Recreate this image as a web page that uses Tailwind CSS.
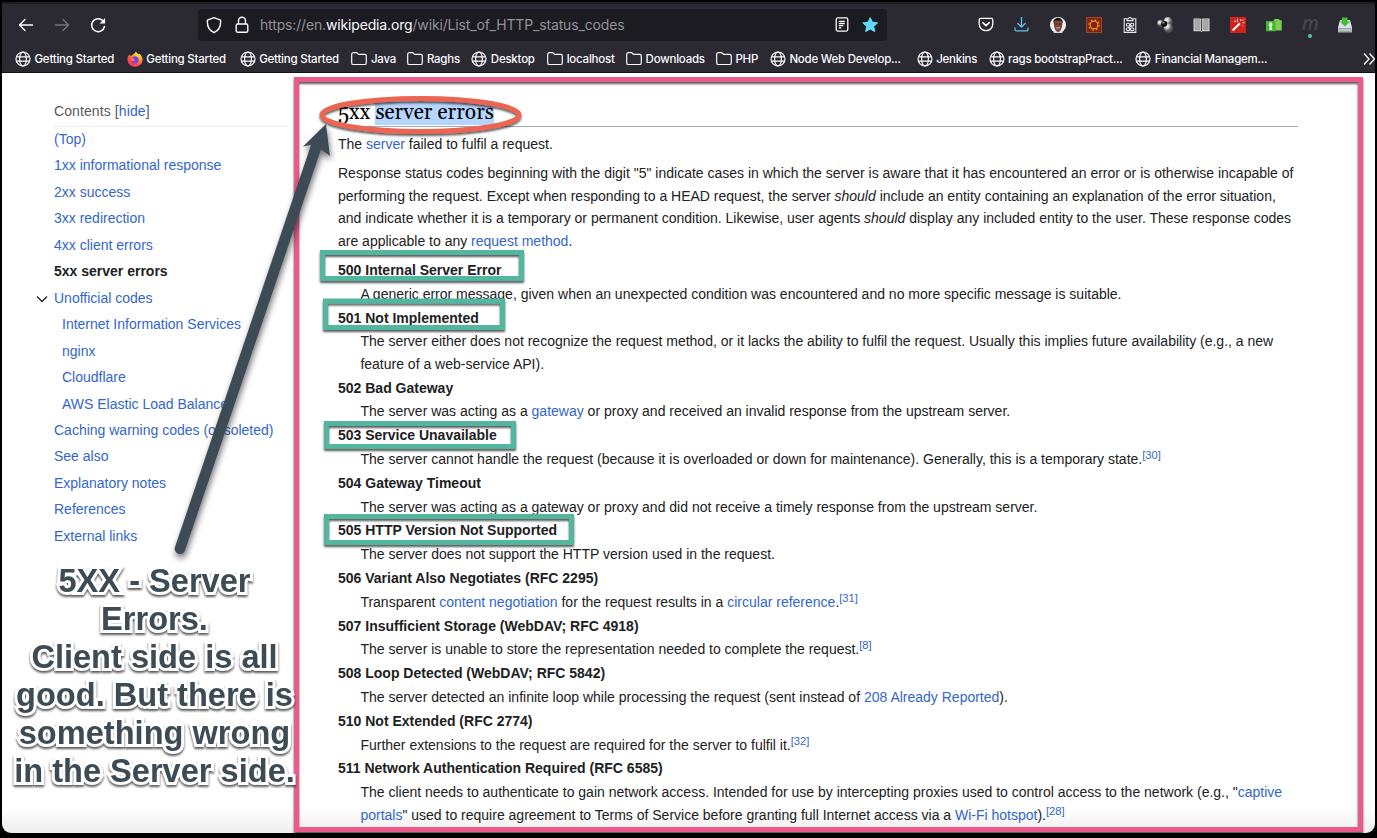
<!DOCTYPE html>
<html lang="en">
<head>
<meta charset="utf-8">
<title>List of HTTP status codes</title>
<script src="https://cdn.jsdelivr.net/npm/@tailwindcss/browser@4"></script>
</head>
<body class="w-[1377px] h-[838px] overflow-hidden bg-black relative font-['Liberation_Sans',Arial,sans-serif]">
<svg width="0" height="0" class="absolute">
  <defs>
    <symbol id="globe" viewBox="0 0 16 16"><g fill="none" stroke="#fbfbfe" stroke-width="1.2"><circle cx="8" cy="8" r="7"/><ellipse cx="8" cy="8" rx="3.4" ry="7"/><path d="M1.5 5.8h13M1.5 10.2h13"/></g></symbol>
    <symbol id="folder" viewBox="0 0 16 16"><path d="M2.3 1.600h3.400l1.800 1.800h6.200a1.600 1.600 0 0 1 1.600 1.600v6.900a1.600 1.600 0 0 1-1.600 1.600H2.300a1.600 1.600 0 0 1-1.600-1.600V3.200a1.600 1.600 0 0 1 1.600-1.600z" fill="none" stroke="#fbfbfe" stroke-width="1.2"/></symbol>
    <radialGradient id="fx" cx=".75" cy=".15" r="1"><stop offset="0" stop-color="#fff04d"/><stop offset=".4" stop-color="#ff9a2a"/><stop offset=".75" stop-color="#ff4547"/><stop offset="1" stop-color="#e8267a"/></radialGradient>
    <symbol id="fox" viewBox="0 0 16 16"><path d="M8.5.4c1.500.9 2.300 2 2.700 3.200l1.200-.900c2 1.600 3.200 3.600 3.200 6A7.600 7.300 0 0 1 .4 8.700c0-2.200.7-4 2-5.500l.600 1.600 2-.300C6 2.700 8.400 2.300 8.500.4z" fill="url(#fx)"/><path d="M4.700 6.600 7 5.500c2.500-.6 4.700.8 4.700 3.200a3.700 3.700 0 0 1-7.300 1c1.300.9 3 .5 3.700-.5-1.300 0-1.500-.8-.8-1.400-1 0-2-.4-2.600-1.200z" fill="#7542e5"/></symbol>
  </defs>
</svg>

<div class="ml-[2px] mt-[2px] w-[1373px] h-[831px] bg-white rounded-b-[9px] overflow-hidden flex flex-col bg-linear-to-b from-white from-97% to-[#eeeeee]">
  <header class="h-[71px] shrink-0 bg-[#2b2a33] border-t-2 border-[#1c1b22] border-b-[#111116] border-b-1 text-[#fbfbfe] font-[Inter,sans-serif]">
    <div class="h-[41px] flex items-center pl-[15px]">
      <svg class="w-[18px] h-4" viewBox="0 0 18 16" fill="none" stroke="#fbfbfe" stroke-width="1.4" stroke-linecap="round" stroke-linejoin="round"><path d="M15.500 8H2.500M8 2.500 2.500 8 8 13.500"/></svg>
      <svg class="w-[18px] h-4 ml-[18px]" viewBox="0 0 18 16" fill="none" stroke="#74737b" stroke-width="1.4" stroke-linecap="round" stroke-linejoin="round"><path d="M2.500 8h13M10 2.500l5.500 5.500-5.500 5.500"/></svg>
      <svg class="w-[18px] h-[18px] ml-[18px]" viewBox="0 0 18 18"><path d="M15.500 10.500a6.500 6.500 0 1 1-1.800-6" fill="none" stroke="#fbfbfe" stroke-width="1.500" stroke-linecap="round"/><path d="M16.100 2v5.500h-5.500z" fill="#fbfbfe"/></svg>
      <div class="ml-[91px] w-[689px] h-8 rounded-[4px] bg-[#1c1b22] flex items-center pl-2">
        <svg class="w-4 h-[18px]" viewBox="0 0 16 18" fill="none" stroke="#fbfbfe" stroke-width="1.400" stroke-linejoin="round"><path d="M8 1.600l6.600 2.500c.4 5.500-1.600 10.300-6.600 12.600C3 14.400 1 9.600 1.400 4.100z"/></svg>
        <svg class="w-[14px] h-[18px] ml-[13px]" viewBox="0 0 14 18" fill="none" stroke="#fbfbfe" stroke-width="1.400"><rect x="1.200" y="8" width="11.600" height="8.300" rx="1.600"/><path d="M3.500 8V4.700a3.500 3.500 0 0 1 7 0V8"/></svg>
        <span class="ml-[11px] w-[570px] text-[14px] tracking-[-0.155px] leading-5 text-[#93929a] whitespace-nowrap">https://en.<span class="text-[#fbfbfe]">wikipedia.org</span>/wiki/List_of_HTTP_status_codes</span>
        <svg class="w-[14px] h-4 ml-[5px]" viewBox="0 0 14 16" fill="none" stroke="#fbfbfe" stroke-width="1.300"><rect x="1.200" y=".9" width="11.600" height="13.200" rx="1.500"/><path d="M3.800 4.300h6M3.800 6.500h6M3.800 8.700h4.500M3.800 10.800h2.500"/></svg>
        <svg class="w-4 h-4 ml-[13px]" viewBox="0 0 16 16"><path d="M8.200 .6l2.200 4.700 5.200.6-3.900 3.500 1.100 5.200-4.600-2.500-4.600 2.500 1.100-5.200L.8 5.900l5.200-.6z" fill="#5ddcff" stroke="#5ddcff" stroke-linejoin="round"/></svg>
      </div>
      <div class="ml-[91px] flex items-center gap-[19.9px]">
        <svg class="w-4 h-4" viewBox="0 0 16 16" fill="none" stroke="#fbfbfe" stroke-width="1.300" stroke-linecap="round" stroke-linejoin="round"><path d="M2.800 1.300h10.400a1.600 1.600 0 0 1 1.600 1.600v4A6.800 6.800 0 0 1 1.200 6.900v-4a1.600 1.600 0 0 1 1.600-1.600z"/><path d="M4.800 5.700 8 8.700l3.200-3" stroke-width="1.600"/></svg>
        <svg class="w-4 h-4" viewBox="0 0 16 16" fill="none" stroke="#5ac8ea" stroke-width="1.300" stroke-linecap="round" stroke-linejoin="round"><path d="M7.500 .5v9.500M3.800 6.500 7.500 10.100 11.200 6.500M1 11v1.400a1.500 1.500 0 0 0 1.500 1.500h10a1.500 1.500 0 0 0 1.500-1.500V11"/></svg>
        <svg class="w-4 h-4" viewBox="0 0 16 16"><circle cx="8" cy="8" r="8" fill="#f1f0f0"/><path d="M3 15c1-2 9-2 10 0a8 8 0 0 1-10 0z" fill="#d9d9e2"/><path d="M3.800 6c0-7 8.800-7 8.600 0 0 5-2 9-4.300 9S3.800 11 3.800 6z" fill="#7d4a3b"/><path d="M3.300 6.500C2.300-1 13.700-1 12.700 6.500 12 3.800 10.500 3.600 8 3.700 5.500 3.600 4 3.800 3.300 6.500z" fill="#211815"/><path d="M4.500 7h3M8.500 7h3" stroke="#3a211a" stroke-width="1.200"/><path d="M6.200 10.900h3.600" stroke="#ddd" stroke-width=".8"/></svg>
        <svg class="w-4 h-4" viewBox="0 0 16 16"><path d="M0 0h16v16H0z" fill="#a0452a"/><path d="M1 1h14v14H1z" fill="#7e2410"/><g fill="none" stroke="#ee951f"><circle cx="8" cy="8" r="3.900" stroke-width="1.200"/><circle cx="8" cy="8" r="5.100" stroke-width="1.300" stroke-dasharray="1.600 2.405"/></g></svg>
        <svg class="w-4 h-4" viewBox="0 0 16 16" fill="none" stroke="#e8e8ec" stroke-width="1.100"><path d="M4.800 1.800H2.200v13.600h11.600V1.800h-2.600"/><path d="M5 3.600V1.800h1.600a1.400 1.400 0 0 1 2.800 0H11v1.800z"/><rect x="4.400" y="6.200" width="3.300" height="2.800" rx="1.300"/><rect x="8.500" y="6.200" width="3.300" height="2.800" rx="1.300"/><rect x="4.400" y="10.800" width="3.300" height="2.800" rx="1.300"/><rect x="8.500" y="10.800" width="3.300" height="2.800" rx="1.300"/><path d="M6 11l4-2.300"/></svg>
        <svg class="w-4 h-4" viewBox="0 0 16 16"><defs><radialGradient id="ball" cx=".35" cy=".3"><stop stop-color="#fff"/><stop offset=".5" stop-color="#c1c1c1"/><stop offset="1" stop-color="#555"/></radialGradient><radialGradient id="dark" cx=".35" cy=".3"><stop stop-color="#aaa"/><stop offset=".5" stop-color="#222"/><stop offset="1" stop-color="#050505"/></radialGradient></defs><circle cx="11" cy="4.700" r="4.600" fill="url(#ball)"/><circle cx="11.300" cy="11" r="4.700" fill="url(#ball)"/><circle cx="3.600" cy="6.500" r="3.400" fill="url(#ball)"/><circle cx="7.200" cy="6.800" r="3" fill="url(#dark)"/></svg>
        <svg class="w-[17px] h-4" viewBox="0 0 17 16"><path d="M.5 1.500h7l1 .8 1-.8h7v12.800h-7l-1 1-1-1h-7z" fill="#d5d5d5"/><path d="M1.500 2h6v11.300h-6zM9.500 2h6v11.300h-6z" fill="#a6a6a6"/><path d="M8.500 2.500v12" stroke="#4a4a4a"/></svg>
        <svg class="w-4 h-4" viewBox="0 0 16 16"><path d="M0 0h16v16H0z" fill="#d2201d"/><path d="M2.700 13.500 10 6.200" stroke="#fff" stroke-width="2"/><path d="M4 4.300h2M7.500 3.300v2M10.500 2l.2 2M13.800 2.300l-1.500 1.500M12.500 5.500l2 .3M12 8l1.200 1.200M7 2l1 .6" stroke="#fff" stroke-width=".9"/></svg>
        <svg class="w-4 h-4" viewBox="0 0 16 16"><path d="M7.500 3.200l1.300-1.300h4l1.200 1.300h1.700V13.500h-8z" fill="#7bcf4d"/><path d="M0 4h9.500v10.200H0z" fill="#43b733"/><path d="M4.700 4.800 7 7.400H2.400z" fill="#e1f5db"/><circle cx="4.700" cy="8.400" r="1.600" fill="#e1f5db"/><circle cx="4.700" cy="11.500" r="1.600" fill="#e1f5db"/></svg>
        <div class="w-4 h-4 relative"><i class="absolute left-0 -top-[6px] text-[19px] leading-6 text-[#46464b] font-['Open_Sans',sans-serif] font-semibold">m</i><b class="absolute left-[6px] top-[17px] w-1 h-1 rounded-full bg-[#5bc4a0]"></b></div>
        <svg class="w-4 h-4 ml-[-1px]" viewBox="0 0 16 16"><path d="M3 3h10l2 7.500v4.800H1v-4.800z" fill="#dde1e6"/><path d="M1.500 11h13v4.300h-13z" fill="#98a2a9"/><path d="M2.500 13h11" stroke="#dfe4e8"/><path d="M5 .5h5.500v4H13L8 9.500l-5-5h2z" fill="#44bb35"/></svg>
      </div>
    </div>
    <nav class="h-[27px] flex items-center pl-[13px] text-[11.5px] font-medium tracking-[-0.23px] leading-4 whitespace-nowrap">
      <div class="w-[112px] flex items-center gap-[3.5px]"><svg class="w-4 h-4"><use href="#globe"/></svg><span>Getting Started</span></div>
      <div class="w-[113px] flex items-center gap-[3.5px]"><svg class="w-4 h-4"><use href="#fox"/></svg><span>Getting Started</span></div>
      <div class="w-[112px] flex items-center gap-[3.5px]"><svg class="w-4 h-4"><use href="#globe"/></svg><span>Getting Started</span></div>
      <div class="w-[56px] flex items-center gap-[3.5px]"><svg class="w-4 h-4"><use href="#folder"/></svg><span>Java</span></div>
      <div class="w-[64px] flex items-center gap-[3.5px]"><svg class="w-4 h-4"><use href="#folder"/></svg><span>Raghs</span></div>
      <div class="w-[76px] flex items-center gap-[3.5px]"><svg class="w-4 h-4"><use href="#globe"/></svg><span>Desktop</span></div>
      <div class="w-[79px] flex items-center gap-[3.5px]"><svg class="w-4 h-4"><use href="#folder"/></svg><span>localhost</span></div>
      <div class="w-[90px] flex items-center gap-[3.5px]"><svg class="w-4 h-4"><use href="#folder"/></svg><span>Downloads</span></div>
      <div class="w-[54px] flex items-center gap-[3.5px]"><svg class="w-4 h-4"><use href="#folder"/></svg><span>PHP</span></div>
      <div class="w-[147px] flex items-center gap-[3.5px]"><svg class="w-4 h-4"><use href="#globe"/></svg><span>Node Web Develop...</span></div>
      <div class="w-[72px] flex items-center gap-[3.5px]"><svg class="w-4 h-4"><use href="#globe"/></svg><span>Jenkins</span></div>
      <div class="w-[147px] flex items-center gap-[3.5px]"><svg class="w-4 h-4"><use href="#globe"/></svg><span>rags bootstrapPract...</span></div>
      <div class="w-[228px] flex items-center gap-[3.5px]"><svg class="w-4 h-4"><use href="#globe"/></svg><span>Financial Managem...</span></div>
      <svg class="w-3 h-4 shrink-0" viewBox="0 0 12 16" fill="none" stroke="#fbfbfe" stroke-width="1.300"><path d="M1 2.500 6 8l-5 5.500M6.500 2.500l5 5.500-5 5.500"/></svg>
    </nav>
  </header>

  <div class="flex">
    <aside class="pl-[52px] pt-[25px] w-[286px] shrink-0 text-[14px] text-[#3366cc] whitespace-nowrap">
      <div class="h-[29px] pt-[3px] leading-[20px] border-b border-[#eaecf0] text-[#54595d]"><span class="tracking-[0.1px]">Contents [<span class="text-[#3366cc]">hide</span>]</span></div>
      <ul class="leading-[26.45px] -mt-px">
        <li>(Top)</li>
        <li>1xx informational response</li>
        <li>2xx success</li>
        <li>3xx redirection</li>
        <li>4xx client errors</li>
        <li class="font-bold text-[#202122]">5xx server errors</li>
        <li class="flex items-center -ml-[18px]"><svg class="w-3 h-3 mr-[6px] mt-[3px]" viewBox="0 0 12 12" fill="none" stroke="#202122" stroke-width="1.300"><path d="M1 3.500l5 5 5-5"/></svg>Unofficial codes</li>
        <li class="pl-2">Internet Information Services</li>
        <li class="pl-2">nginx</li>
        <li class="pl-2">Cloudflare</li>
        <li class="pl-2">AWS Elastic Load Balancer</li>
        <li>Caching warning codes (obsoleted)</li>
        <li>See also</li>
        <li>Explanatory notes</li>
        <li>References</li>
        <li>External links</li>
      </ul>
    </aside>
    <main class="ml-[50px] pt-[25px] w-[960px] text-[14px] leading-[22.4px] text-[#202122] whitespace-nowrap">
      <h2 class="h-[29px] border-b border-[#a2a9b1] font-[Gelasio,Georgia,'Liberation_Serif',serif] text-[21px] leading-[30px] text-black">5xx <span class="bg-[#b5d5ff] inline-block leading-[23px]">server errors</span></h2>
      <p class="mt-[6px]">The <a class="text-[#3366cc]">server</a> failed to fulfil a request.</p>
      <p class="mt-[7px]">Response status codes beginning with the digit "5" indicate cases in which the server is aware that it has encountered an error or is otherwise incapable of<br>performing the request. Except when responding to a HEAD request, the server <i>should</i> include an entity containing an explanation of the error situation,<br>and indicate whether it is a temporary or permanent condition. Likewise, user agents <i>should</i> display any included entity to the user. These response codes<br>are applicable to any <a class="text-[#3366cc]">request method</a>.</p>
      <dl class="mt-[7px] [&_dt]:font-bold [&_dt]:mb-[1.4px] [&_dd]:mb-[1.4px] [&_dd]:ml-[22.4px] [&_a]:text-[#3366cc] [&_sup]:text-[11.2px] [&_sup]:leading-none [&_sup]:text-[#3366cc] [&_sup]:top-[-5px]">
        <dt>500 Internal Server Error</dt>
        <dd>A generic error message, given when an unexpected condition was encountered and no more specific message is suitable.</dd>
        <dt>501 Not Implemented</dt>
        <dd>The server either does not recognize the request method, or it lacks the ability to fulfil the request. Usually this implies future availability (e.g., a new<br>feature of a web-service API).</dd>
        <dt>502 Bad Gateway</dt>
        <dd>The server was acting as a <a>gateway</a> or proxy and received an invalid response from the upstream server.</dd>
        <dt>503 Service Unavailable</dt>
        <dd>The server cannot handle the request (because it is overloaded or down for maintenance). Generally, this is a temporary state.<sup>[30]</sup></dd>
        <dt>504 Gateway Timeout</dt>
        <dd>The server was acting as a gateway or proxy and did not receive a timely response from the upstream server.</dd>
        <dt>505 HTTP Version Not Supported</dt>
        <dd>The server does not support the HTTP version used in the request.</dd>
        <dt>506 Variant Also Negotiates (RFC 2295)</dt>
        <dd>Transparent <a>content negotiation</a> for the request results in a <a>circular reference</a>.<sup>[31]</sup></dd>
        <dt>507 Insufficient Storage (WebDAV; RFC 4918)</dt>
        <dd>The server is unable to store the representation needed to complete the request.<sup>[8]</sup></dd>
        <dt>508 Loop Detected (WebDAV; RFC 5842)</dt>
        <dd>The server detected an infinite loop while processing the request (sent instead of <a>208 Already Reported</a>).</dd>
        <dt>510 Not Extended (RFC 2774)</dt>
        <dd>Further extensions to the request are required for the server to fulfil it.<sup>[32]</sup></dd>
        <dt>511 Network Authentication Required (RFC 6585)</dt>
        <dd>The client needs to authenticate to gain network access. Intended for use by intercepting proxies used to control access to the network (e.g., "<a>captive</a><br><a>portals</a>" used to require agreement to Terms of Service before granting full Internet access via a <a>Wi-Fi hotspot</a>).<sup>[28]</sup></dd>
      </dl>
    </main>
  </div>
</div>

<svg class="absolute left-0 top-0 w-[1377px] h-[838px] pointer-events-none" viewBox="0 0 1377 838" fill="none">
  <defs>
    <filter id="s1" x="-10%" y="-30%" width="120%" height="170%"><feDropShadow dx="0" dy="2" stdDeviation=".8" flood-color="#000" flood-opacity=".65"/></filter>
    <filter id="s2" x="-20%" y="-10%" width="140%" height="120%"><feDropShadow dx="1" dy="4" stdDeviation="3" flood-color="#000" flood-opacity=".55"/></filter>
  </defs>
  <rect x="296.500" y="79.500" width="1064" height="750" stroke="#ea5a8a" stroke-width="5" filter="url(#s1)"/>
  <g stroke="#52b69f" stroke-width="5" filter="url(#s1)">
    <rect x="322.500" y="252.500" width="199" height="26"/>
    <rect x="325.500" y="301" width="177" height="26.500"/>
    <rect x="326.500" y="423.500" width="187" height="23"/>
    <rect x="326.500" y="516.500" width="245" height="26"/>
  </g>
  <ellipse cx="420.500" cy="115" rx="98.500" ry="16.500" stroke="#ec6552" stroke-width="5" filter="url(#s1)"/>
  <g filter="url(#s2)">
    <path d="M326 124l4 32-9-6.500L185 550.500a5.200 5.200 0 0 1-10-3.500L311 145l-8 1.500z" fill="#3d4b55"/>
  </g>
</svg>
<div class="absolute left-[-5px] top-[562px] w-[319px] text-center font-bold text-[32.6px] leading-[38px] text-[#3d4b55] whitespace-nowrap [-webkit-text-stroke:6px_white] [paint-order:stroke_fill] [stroke-linejoin:round] drop-shadow-[0_2px_1px_rgba(0,0,0,0.65)]">5XX - Server<br>Errors.<br>Client side is all<br>good. But there is<br>something wrong<br>in the Server side.</div>
</body>
</html>
